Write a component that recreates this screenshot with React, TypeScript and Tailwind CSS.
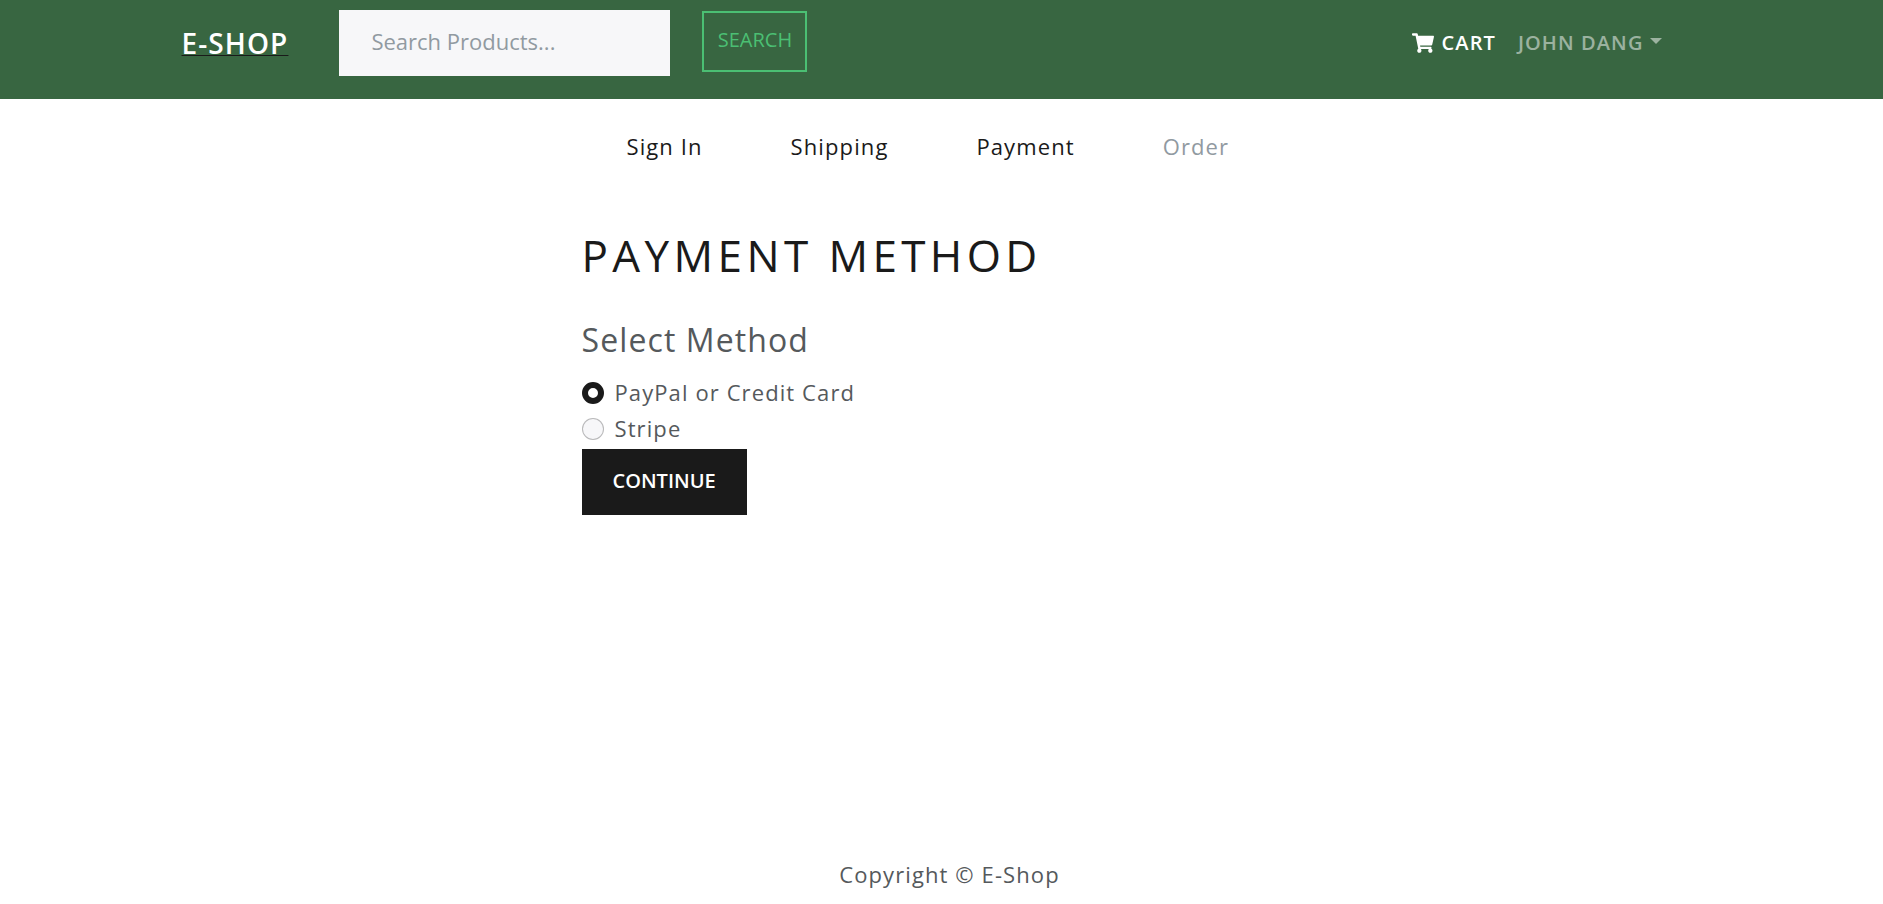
import { useState } from "react";
import type { FormEvent } from "react";
import { FaShoppingCart } from "react-icons/fa";

const steps = [
  { label: "Sign In", done: true },
  { label: "Shipping", done: true },
  { label: "Payment", done: true },
  { label: "Order", done: false },
];

const methods = ["PayPal or Credit Card", "Stripe"];

function Header() {
  return (
    <header className="bg-[#386641] px-6 pt-2.5 pb-[23px]">
      <nav className="mx-auto flex max-w-[1520px] items-center">
        <a href="#home" className="text-[28px] leading-9 font-semibold text-white underline decoration-[#1a1a1a] decoration-1 underline-offset-1">
          E-SHOP
        </a>
        <form className="ml-[51px] flex items-center gap-8" onSubmit={(e: FormEvent) => e.preventDefault()}>
          <input
            type="search"
            aria-label="Search Products"
            placeholder="Search Products..."
            className="h-[66px] w-[331px] bg-[#f7f7f9] px-8 pb-1 text-[22px] font-normal tracking-normal text-[#55595c] outline-none placeholder:text-[#919aa1]"
          />
          <button type="submit" className="mb-1 h-[61px] min-w-[105px] border-2 border-[#4bbf73] px-3 pb-0.5 text-[20px] font-normal tracking-normal text-[#4bbf73]">
            SEARCH
          </button>
        </form>
        <div className="ml-auto flex items-center gap-[22px] pr-10 text-[20px] font-semibold">
          <a href="#cart" className="flex items-center gap-2 text-white">
            <FaShoppingCart className="size-[22px]" aria-hidden="true" />
            CART
          </a>
          <button type="button" className="flex items-center gap-1.5 text-white/50">
            JOHN DANG
            <svg viewBox="0 0 12 6" className="mb-1 w-3" fill="currentColor" aria-hidden="true">
              <path d="M0 0h12L6 6z" />
            </svg>
          </button>
        </div>
      </nav>
    </header>
  );
}

export default function App() {
  const [method, setMethod] = useState(methods[0]);
  return (
    <div className="flex min-h-screen flex-col bg-white font-['Open_Sans',sans-serif] text-[22px] leading-9 font-normal tracking-wider text-[#55595c]">
      <Header />
      <main className="mx-auto w-full max-w-[720px] grow pt-[29px]">
        <ol className="flex gap-[88px] px-[45px]">
          {steps.map((s) => (
            <li key={s.label}>
              {s.done ? (
                <a href={"#" + s.label} className="text-[#1a1a1a]">{s.label}</a>
              ) : (
                <span className="text-[#919aa1]">{s.label}</span>
              )}
            </li>
          ))}
        </ol>
        <h1 className="mt-16 text-[44px] leading-[54px] font-normal tracking-widest text-[#1a1a1a]">PAYMENT METHOD</h1>
        <form className="mt-[38px]" onSubmit={(e: FormEvent) => e.preventDefault()}>
          <fieldset>
            <legend className="mb-3.5 text-[32px] leading-10">Select Method</legend>
            {methods.map((m) => (
              <label key={m} className="flex items-center gap-[11px]">
                <input
                  type="radio"
                  name="method"
                  value={m}
                  checked={method === m}
                  onChange={() => setMethod(m)}
                  className="mt-0.5 size-[22px] appearance-none rounded-full border border-black/25 bg-[#f7f7f9] checked:border-[6px] checked:border-[#1a1a1a] checked:bg-white"
                />
                {m}
              </label>
            ))}
          </fieldset>
          <button type="submit" className="mt-[3px] h-[66px] bg-[#1a1a1a] px-[31px] pb-0.5 text-[20px] font-semibold tracking-normal text-white">
            CONTINUE
          </button>
        </form>
      </main>
      <footer className="pb-3 pl-4 text-center">Copyright © E-Shop</footer>
    </div>
  );
}
